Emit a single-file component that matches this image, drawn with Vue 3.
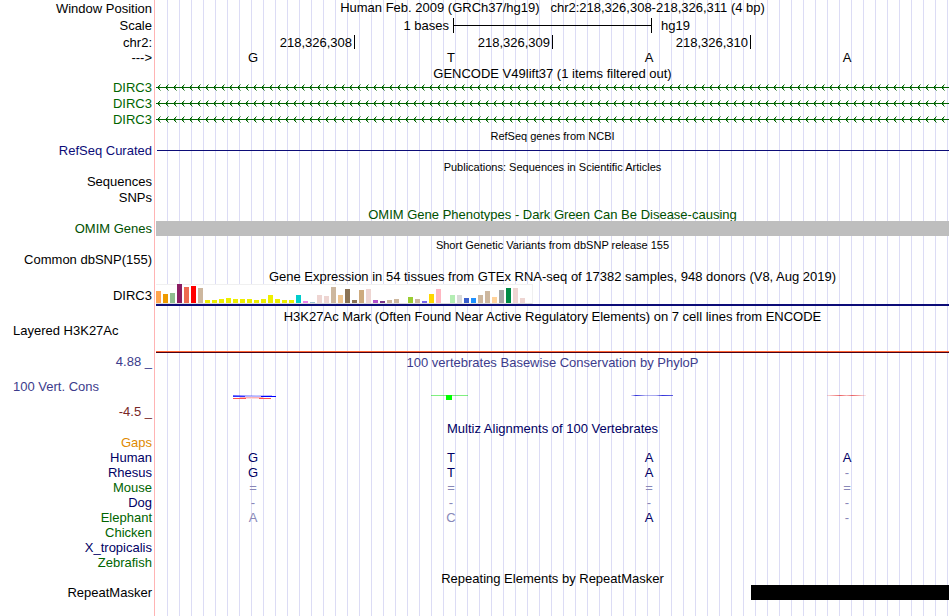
<template>
  <main class="browser">
    <div class="row h17">
      <div class="label">Window Position</div>
      <h1 class="title up">Human Feb. 2009 (GRCh37/hg19) &nbsp; chr2:218,326,308-218,326,311 (4 bp)</h1>
    </div>
    <div class="row h17">
      <div class="label">Scale</div>
      <div class="scale">
        <span class="scale-left">1 bases</span>
        <span class="scale-bar"></span>
        <span class="scale-right">hg19</span>
      </div>
    </div>
    <div class="row h16">
      <div class="label">chr2:</div>
      <div class="positions">
        <span v-for="p in positions" :key="p">{{ p }}</span>
      </div>
    </div>
    <div class="row h15">
      <div class="label">---&gt;</div>
      <div class="bases sequence">
        <span v-for="(b, i) in human" :key="i">{{ b }}</span>
      </div>
    </div>

    <div class="row h14"><h2 class="title">GENCODE V49lift37 (1 items filtered out)</h2></div>
    <div v-for="n in 3" :key="n" class="row h16">
      <a href="#" class="label gencode">DIRC3</a>
      <svg class="gene" height="7" aria-hidden="true">
        <defs>
          <pattern :id="'chevron' + n" width="8" height="7" patternUnits="userSpaceOnUse">
            <path d="M0 3h8v1h-8z M2 2h1v1h-1z M2 4h1v1h-1z M3 1h1v1h-1z M3 5h1v1h-1z" fill="#006400" />
            <path d="M4 0h1v1h-1z M4 6h1v1h-1z M3 2h1v1h-1z M3 4h1v1h-1z" fill="#006400" opacity="0.5" />
          </pattern>
        </defs>
        <rect width="100%" height="7" :fill="'url(#chevron' + n + ')'" />
      </svg>
    </div>

    <div class="row h16"><h2 class="title small">RefSeq genes from NCBI</h2></div>
    <div class="row h15">
      <a href="#" class="label refseq">RefSeq Curated</a>
      <div class="refseq-line"></div>
    </div>

    <div class="row h15"><h2 class="title small">Publications: Sequences in Scientific Articles</h2></div>
    <div class="row h16"><div class="label">Sequences</div></div>
    <div class="row h16"><div class="label">SNPs</div></div>

    <div class="row h16"><h2 class="title low omim">OMIM Gene Phenotypes - Dark Green Can Be Disease-causing</h2></div>
    <div class="row h15">
      <a href="#" class="label omim">OMIM Genes</a>
      <div class="omim-bar"></div>
    </div>

    <div class="row h16"><h2 class="title small">Short Genetic Variants from dbSNP release 155</h2></div>
    <div class="row h15"><div class="label">Common dbSNP(155)</div></div>

    <div class="row h17"><h2 class="title low">Gene Expression in 54 tissues from GTEx RNA-seq of 17382 samples, 948 donors (V8, Aug 2019)</h2></div>
    <div class="row h22">
      <a href="#" class="label">DIRC3</a>
      <div class="gtex">
        <div class="gtex-bars">
          <i v-for="(t, i) in tissues" :key="i" :style="{ height: t[0] + 'px', background: t[1] }"></i>
        </div>
      </div>
    </div>

    <div class="row h19"><h2 class="title">H3K27Ac Mark (Often Found Near Active Regulatory Elements) on 7 cell lines from ENCODE</h2></div>
    <div class="row h28">
      <div class="label wide">Layered H3K27Ac</div>
      <div class="h3k"></div>
    </div>

    <div class="row conservation">
      <div class="cons-labels">
        <span class="cons-max">4.88 _</span>
        <span class="cons-name">100 Vert. Cons</span>
        <span class="cons-min">-4.5 _</span>
      </div>
      <div class="cons-track">
        <h2 class="title phylop">100 vertebrates Basewise Conservation by PhyloP</h2>
        <div class="logos">
          <svg v-for="(logo, i) in logos" :key="i" width="48" height="8" aria-hidden="true">
            <defs>
              <linearGradient :id="'fade' + i">
                <stop v-for="s in logo.stops" :key="s[0]" :offset="s[0]" :stop-color="logo.color" :stop-opacity="s[1]" />
              </linearGradient>
            </defs>
            <rect :x="logo.x" y="2" :width="logo.w" height="1" :fill="'url(#fade' + i + ')'" />
            <template v-if="i === 0">
              <rect x="2" y="3" width="12" height="1" fill="#3232ff" />
              <rect x="14" y="3" width="16" height="1" fill="#b4b4ff" />
              <rect x="30" y="3" width="15" height="1" fill="#0000ff" />
              <rect x="9" y="4" width="23" height="1" fill="#ffb4b4" />
              <rect x="15" y="5" width="13" height="1" fill="#ffdcdc" />
              <rect x="2" y="5" width="13" height="1" fill="#ff5050" />
              <rect x="28" y="5" width="12" height="1" fill="#ff5050" />
            </template>
            <rect v-if="i === 1" x="17" y="2" width="6" height="5" fill="#00ff00" />
          </svg>
        </div>
      </div>
    </div>

    <div class="row h15"><h2 class="title multiz">Multiz Alignments of 100 Vertebrates</h2></div>
    <div v-for="s in species" :key="s.name" class="row h15">
      <div class="label" :class="s.tone">{{ s.name }}</div>
      <div class="bases">
        <span v-for="(b, i) in s.bases" :key="i" :class="{ faded: b !== human[i] }">{{ b }}</span>
      </div>
    </div>

    <div class="row h15"><h2 class="title">Repeating Elements by RepeatMasker</h2></div>
    <div class="row h15">
      <a href="#" class="label">RepeatMasker</a>
      <div class="repeat"><div class="repeat-bar"></div></div>
    </div>
  </main>
</template>

<script setup>
const positions = ['218,326,308', '218,326,309', '218,326,310', '']

// bases that differ from these are drawn lighter
const human = ['G', 'T', 'A', 'A']

// [bar height, colour] for each GTEx tissue
const tissues = [
  [12, '#ffa54f'], [9, '#ee9a00'], [10, '#8fbc8f'], [19, '#8b1c62'], [16, '#ee6a50'], [17, '#ff0000'],
  [15, '#cdb79e'], [3, '#eeee00'], [3, '#eeee00'], [4, '#eeee00'], [5, '#eeee00'], [4, '#eeee00'],
  [4, '#eeee00'], [4, '#eeee00'], [3, '#eeee00'], [4, '#eeee00'], [8, '#eeee00'], [4, '#eeee00'],
  [3, '#eeee00'], [3, '#eeee00'], [8, '#00cdcd'], [2, '#ee82ee'], [1, '#9ac0cd'], [8, '#eed5d2'],
  [7, '#eed5d2'], [16, '#cdb79e'], [8, '#eec591'], [14, '#8b7355'], [3, '#8b7355'], [13, '#cdaa7d'],
  [14, '#eed5d2'], [3, '#b452cd'], [2, '#7a378b'], [3, '#cdb79e'], [4, '#cdb79e'], [0, '#cdb79e'],
  [6, '#9acd32'], [4, '#cdb79e'], [2, '#7a67ee'], [9, '#ffd700'], [14, '#ffb6c1'], [0, '#cd9b1d'],
  [8, '#b4eeb4'], [8, '#d9d9d9'], [5, '#3a5fcd'], [5, '#1e90ff'], [8, '#cdb79e'], [12, '#cdb79e'],
  [6, '#ffd39b'], [13, '#a6a6a6'], [15, '#008b45'], [15, '#eed5d2'], [5, '#eed5d2'], [0, '#ff00ff']
]

const logos = [
  { color: '#0000ff', x: 2, w: 39, stops: [[0, 0.6], [0.3, 0.35], [0.6, 0.2], [1, 0.3]] },
  { color: '#00e000', x: 2, w: 37, stops: [[0, 0.5], [1, 0.5]] },
  { color: '#0000d0', x: 4, w: 42, stops: [[0, 0.1], [0.12, 0.8], [0.35, 0.3], [0.6, 0.35], [0.75, 0.8], [1, 0.6]] },
  { color: '#e00000', x: 2, w: 39, stops: [[0, 0.15], [0.35, 0.6], [0.5, 0.3], [0.65, 0.6], [1, 0.1]] }
]

const species = [
  { name: 'Gaps', tone: 'gaps', bases: [] },
  { name: 'Human', tone: 'navy', bases: ['G', 'T', 'A', 'A'] },
  { name: 'Rhesus', tone: 'navy', bases: ['G', 'T', 'A', '-'] },
  { name: 'Mouse', tone: 'green', bases: ['=', '=', '=', '='] },
  { name: 'Dog', tone: 'navy', bases: ['-', '-', '-', '-'] },
  { name: 'Elephant', tone: 'green', bases: ['A', 'C', 'A', '-'] },
  { name: 'Chicken', tone: 'green', bases: [] },
  { name: 'X_tropicalis', tone: 'navy', bases: [] },
  { name: 'Zebrafish', tone: 'green', bases: [] }
]
</script>

<style>
body {
  margin: 0;
  background: #fff;
}
</style>

<style scoped>
.browser {
  padding: 0 1px 17px 0;
  font: 13px/15px "Liberation Sans", Arial, sans-serif;
  color: #000;
  background:
    linear-gradient(#ffb4b4, #ffb4b4) 154px 0 / 1px 100% no-repeat,
    repeating-linear-gradient(90deg, #dcdcf5 0 1px, transparent 1px 12px) 167px 0 no-repeat;
}

.row {
  display: grid;
  grid-template-columns: 152px minmax(0, 1fr);
  column-gap: 4px;
  align-items: center;
}

.h14 { height: 14px; }
.h15 { height: 15px; }
.h16 { height: 16px; }
.h17 { height: 17px; }
.h19 { height: 19px; }
.h22 { height: 22px; }
.h28 { height: 28px; }

.label {
  grid-column: 1;
  text-align: right;
  white-space: nowrap;
  color: #000;
  text-decoration: none;
}

.title {
  grid-column: 2;
  margin: 0;
  padding-top: 1px;
  font-size: 13px;
  font-weight: normal;
  line-height: 15px;
  text-align: center;
  white-space: nowrap;
}

.title.low { padding-top: 2px; }

.title.small {
  padding-top: 2px;
  font-size: 11px;
}

.title.up {
  align-self: start;
  padding-top: 0;
}

.gencode, .green { color: #006400; }
.refseq { color: #0c0c78; }
.omim { color: #005000; }
.navy, .multiz { color: #000064; }
.gaps { color: #e08a00; }
.phylop { color: #3c3c8c; }

.scale {
  display: grid;
  grid-template-columns: 1fr 25% 1fr;
  align-items: center;
  padding-right: 1px;
}

.scale-left {
  padding-right: 4px;
  text-align: right;
}

.scale-right { padding-left: 10px; }

.scale-bar {
  height: 15px;
  margin-right: -1px;
  border: solid #000;
  border-width: 0 1px;
  background: linear-gradient(#000, #000) 0 7px / 100% 1px no-repeat;
}

.positions, .bases {
  display: grid;
  grid-template-columns: repeat(4, 1fr);
  padding-right: 1px;
}

.positions span {
  height: 14px;
  padding-right: 2px;
  text-align: right;
}

.positions span + span { border-left: 1px solid #000; }

.bases span {
  padding-right: 4px;
  text-align: center;
}

.bases { color: #000064; }
.bases.sequence { color: #000; }
.bases .faded { color: #8888b8; }

.gene {
  display: block;
  width: 100%;
  shape-rendering: crispEdges;
}

.refseq-line {
  height: 1px;
  margin-left: 1px;
  background: #0c0c78;
}

.omim-bar {
  height: 15px;
  background: #bebebe;
}

.gtex {
  height: 20px;
  border-bottom: 2px solid #0c0c78;
}

.gtex-bars {
  display: flex;
  align-items: flex-end;
  gap: 2px;
  width: max-content;
  height: 19px;
  background: #fff;
  border-right: 1px solid #f0f0f0;
  border-bottom: 1px solid #dcdcdc;
  box-shadow: inset 0 1px #f0f0f0;
}

.gtex-bars i { width: 5px; }

.wide {
  padding-left: 13px;
  text-align: left;
  align-self: start;
  line-height: 11px;
}

.h3k {
  height: 1px;
  align-self: end;
  background: #500014;
  border-top: 1px solid #ff6432;
}

.conservation {
  height: 67px;
  align-items: stretch;
}

.cons-labels {
  display: flex;
  flex-direction: column;
  justify-content: space-between;
  padding: 1px 0;
}

.cons-max, .cons-min { text-align: right; }
.cons-max, .cons-name { color: #3c3c8c; }
.cons-min { color: #782828; }
.cons-name { padding-left: 13px; }

.cons-track { padding-top: 1px; }

.logos {
  display: grid;
  grid-template-columns: repeat(4, 1fr);
  justify-items: center;
  padding: 23px 1px 0 0;
}

.logos svg { display: block; }

.repeat-bar {
  width: 25%;
  height: 15px;
  margin-left: auto;
  background: #000;
}
</style>
